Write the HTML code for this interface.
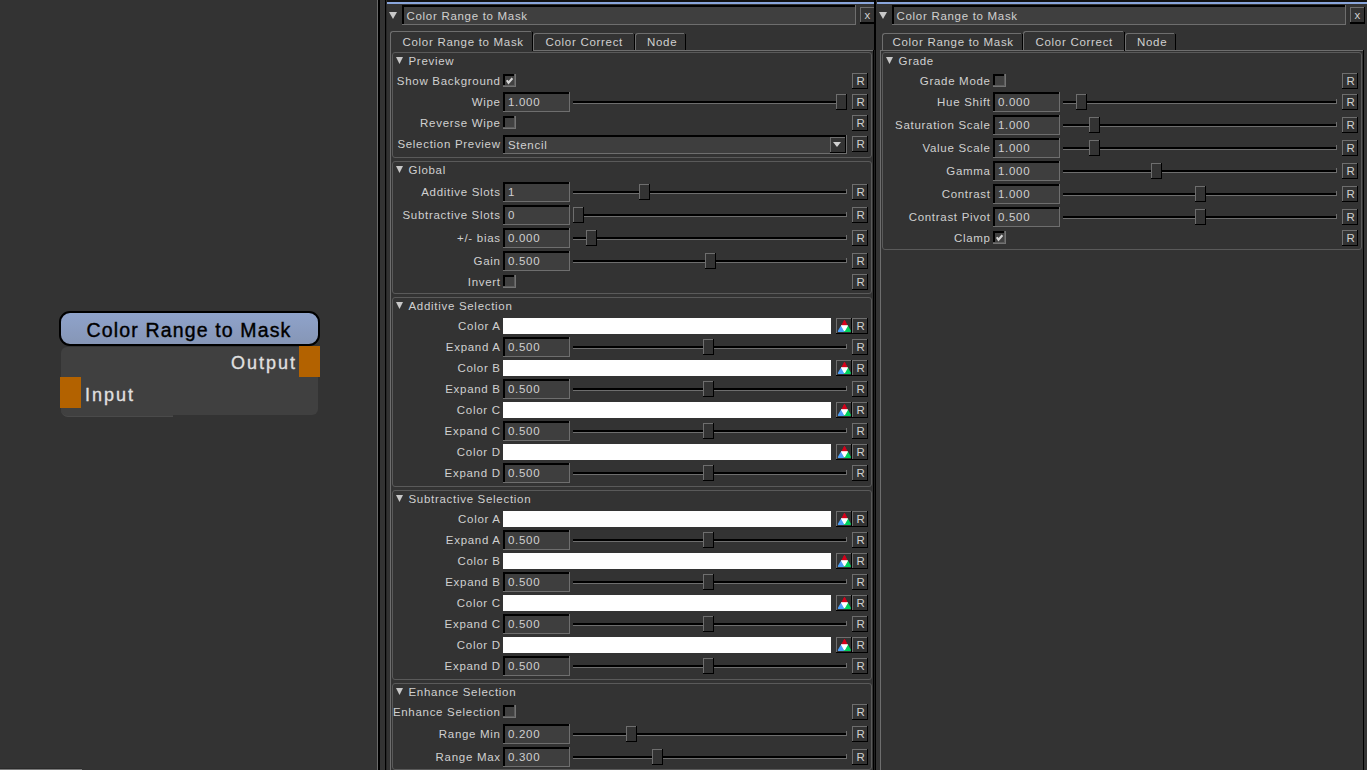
<!DOCTYPE html>
<html><head><meta charset="utf-8"><style>
html,body{margin:0;padding:0;}
body{width:1367px;height:770px;background:#333333;position:relative;overflow:hidden;font-family:"Liberation Sans", sans-serif;}
body>div,body>svg{position:absolute;box-sizing:border-box;}
.t{white-space:nowrap;}
</style></head><body>
<div style="left:0px;top:769px;width:82px;height:1px;background:#7a7a7a;"></div>
<div style="left:0px;top:768px;width:82px;height:1px;background:#2a2a2a;"></div>
<div style="left:61px;top:347px;width:257px;height:68px;background:#404040;border-radius:6px;"></div>
<div style="left:61px;top:398px;width:112px;height:19px;background:#404040;border-bottom:1px solid #4a4a4a;border-bottom-left-radius:7px;"></div>
<div style="left:59px;top:311px;width:261px;height:35px;border:2px solid #000;border-radius:11px;background:linear-gradient(#8fa3cb,#8696b6);"></div>
<div class="t" style="left:86.5px;top:320.24px;font-size:19.5px;line-height:20px;letter-spacing:1.15px;color:#000;-webkit-text-stroke:0.4px #000;">Color Range to Mask</div>
<div style="left:299px;top:346px;width:21px;height:31px;background:#b36200;"></div>
<div style="left:60px;top:377px;width:21px;height:31px;background:#b36200;"></div>
<div class="t" style="right:1070.00px;top:354.26px;font-size:18px;line-height:18px;letter-spacing:2.0px;color:#e0e0e0;text-align:right;-webkit-text-stroke:0.3px #e0e0e0;">Output</div>
<div class="t" style="left:85px;top:385.76px;font-size:18px;line-height:18px;letter-spacing:2.0px;color:#e0e0e0;-webkit-text-stroke:0.3px #e0e0e0;">Input</div>
<div style="left:377px;top:0px;width:1px;height:770px;background:#6a6a6a;"></div>
<div style="left:378px;top:0px;width:2px;height:770px;background:#000;"></div>
<div style="left:385px;top:0px;width:1px;height:770px;background:#000;"></div>
<div style="left:386px;top:0px;width:1px;height:770px;background:#262626;"></div>
<div style="left:387px;top:0px;width:487px;height:2px;background:#111;"></div>
<div style="left:387px;top:2px;width:487px;height:2px;background:#8aa6dc;"></div>
<div style="left:874px;top:0px;width:2px;height:770px;background:#000;"></div>
<div style="left:877px;top:0px;width:490px;height:2px;background:#111;"></div>
<div style="left:877px;top:2px;width:490px;height:2px;background:#8aa6dc;"></div>
<div style="left:390px;top:50px;width:1px;height:720px;background:#6e6e6e;"></div>
<div style="left:533px;top:50px;width:340px;height:1px;background:#6e6e6e;"></div>
<div style="left:873px;top:50px;width:1px;height:720px;background:#000;"></div>
<div style="left:874px;top:50px;width:1px;height:720px;background:#1e1e1e;"></div>
<svg style="left:389px;top:12px" width="8" height="7"><path d="M0 0 L8 0 L4.0 7 Z" fill="#c8c8c8"/></svg>
<div style="left:402px;top:5px;width:454px;height:20px;background:#6e6e6e;"></div>
<div style="left:402px;top:5px;width:453px;height:19px;background:#000;"></div>
<div style="left:404px;top:7px;width:451px;height:17px;background:#3f3f3f;"></div>
<div class="t" style="left:406.5px;top:10.02px;font-size:11.5px;line-height:12px;letter-spacing:0.7px;color:#d0d0d0;">Color Range to Mask</div>
<div style="left:860px;top:7px;width:15px;height:17px;background:#000;"></div>
<div style="left:860px;top:7px;width:14px;height:15px;background:#6e6e6e;"></div>
<div style="left:861px;top:8px;width:13px;height:14px;background:#333333;"></div>
<div class="t" style="left:864.5px;top:9.02px;font-size:11.5px;line-height:12px;letter-spacing:0px;color:#d0d0d0;">x</div>
<div style="left:390px;top:31px;width:141px;height:20px;border-left:1px solid #6e6e6e;border-top:1px solid #6e6e6e;border-top-left-radius:3px;"></div>
<div style="left:532px;top:32px;width:1px;height:19px;background:#000;"></div>
<div class="t" style="left:402.5px;top:36.32px;font-size:11.5px;line-height:12px;letter-spacing:0.7px;color:#d0d0d0;">Color Range to Mask</div>
<div style="left:533px;top:33px;width:100px;height:18px;border-left:1px solid #6e6e6e;border-top:1px solid #6e6e6e;border-top-left-radius:3px;"></div>
<div style="left:634px;top:34px;width:1px;height:17px;background:#000;"></div>
<div class="t" style="left:545.5px;top:36.32px;font-size:11.5px;line-height:12px;letter-spacing:0.7px;color:#d0d0d0;">Color Correct</div>
<div style="left:635px;top:33px;width:49px;height:18px;border-left:1px solid #6e6e6e;border-top:1px solid #6e6e6e;border-top-left-radius:3px;"></div>
<div style="left:685px;top:34px;width:1px;height:17px;background:#000;"></div>
<div class="t" style="left:647px;top:36.32px;font-size:11.5px;line-height:12px;letter-spacing:0.7px;color:#d0d0d0;">Node</div>
<div style="left:533px;top:50px;width:340px;height:1px;background:#6e6e6e;"></div>
<div style="left:392px;top:52px;width:480px;height:106px;border:1px solid #5a5a5a;border-radius:3px;"></div>
<svg style="left:396px;top:57px" width="7" height="7"><path d="M0 0 L7 0 L3.5 7 Z" fill="#c8c8c8"/></svg>
<div class="t" style="left:408.5px;top:55.02px;font-size:11.5px;line-height:12px;letter-spacing:0.7px;color:#d0d0d0;">Preview</div>
<div class="t" style="right:866.30px;top:74.52px;font-size:11.5px;line-height:12px;letter-spacing:0.7px;color:#d0d0d0;text-align:right;">Show Background</div>
<div style="left:503px;top:74px;width:13px;height:13px;background:#737373;"></div>
<div style="left:503px;top:74px;width:12px;height:12px;background:#5c5c5c;"></div>
<div style="left:503px;top:74px;width:11px;height:11px;background:#000;"></div>
<div style="left:505px;top:76px;width:9px;height:9px;background:#414141;"></div>
<svg style="left:503px;top:74px" width="13" height="13"><path d="M3.8 6.2 L5.5 8.8 L9.4 4.2" stroke="#d4d4d4" stroke-width="2.1" fill="none"/></svg>
<div style="left:852px;top:73px;width:16px;height:16px;background:#000000;"></div>
<div style="left:852px;top:73px;width:15px;height:15px;background:#6e6e6e;"></div>
<div style="left:853px;top:74px;width:14px;height:14px;background:#333333;"></div>
<div class="t" style="left:856.5px;top:75.02px;font-size:11.5px;line-height:12px;letter-spacing:0px;color:#d0d0d0;">R</div>
<div class="t" style="right:866.30px;top:96.02px;font-size:11.5px;line-height:12px;letter-spacing:0.7px;color:#d0d0d0;text-align:right;">Wipe</div>
<div style="left:503px;top:92px;width:67px;height:20px;background:#6e6e6e;"></div>
<div style="left:503px;top:92px;width:66px;height:19px;background:#000000;"></div>
<div style="left:505px;top:94px;width:64px;height:17px;background:#3e3e3e;"></div>
<div class="t" style="left:508px;top:96.02px;font-size:11.5px;line-height:12px;letter-spacing:0.7px;color:#d0d0d0;">1.000</div>
<div style="left:573px;top:101px;width:274px;height:2px;background:#000000;"></div>
<div style="left:573px;top:103px;width:274px;height:1px;background:#6e6e6e;"></div>
<div style="left:846px;top:99px;width:1px;height:5px;background:#6e6e6e;"></div>
<div style="left:836px;top:94px;width:11px;height:16px;background:#000000;"></div>
<div style="left:836px;top:94px;width:10px;height:15px;background:#6e6e6e;"></div>
<div style="left:837px;top:95px;width:9px;height:14px;background:#333333;"></div>
<div style="left:852px;top:94px;width:16px;height:16px;background:#000000;"></div>
<div style="left:852px;top:94px;width:15px;height:15px;background:#6e6e6e;"></div>
<div style="left:853px;top:95px;width:14px;height:14px;background:#333333;"></div>
<div class="t" style="left:856.5px;top:96.02px;font-size:11.5px;line-height:12px;letter-spacing:0px;color:#d0d0d0;">R</div>
<div class="t" style="right:866.30px;top:116.52px;font-size:11.5px;line-height:12px;letter-spacing:0.7px;color:#d0d0d0;text-align:right;">Reverse Wipe</div>
<div style="left:503px;top:116px;width:13px;height:13px;background:#737373;"></div>
<div style="left:503px;top:116px;width:12px;height:12px;background:#5c5c5c;"></div>
<div style="left:503px;top:116px;width:11px;height:11px;background:#000;"></div>
<div style="left:505px;top:118px;width:9px;height:9px;background:#414141;"></div>
<div style="left:852px;top:115px;width:16px;height:16px;background:#000000;"></div>
<div style="left:852px;top:115px;width:15px;height:15px;background:#6e6e6e;"></div>
<div style="left:853px;top:116px;width:14px;height:14px;background:#333333;"></div>
<div class="t" style="left:856.5px;top:117.02px;font-size:11.5px;line-height:12px;letter-spacing:0px;color:#d0d0d0;">R</div>
<div class="t" style="right:866.30px;top:138.02px;font-size:11.5px;line-height:12px;letter-spacing:0.7px;color:#d0d0d0;text-align:right;">Selection Preview</div>
<div style="left:503px;top:135px;width:344px;height:19px;background:#6e6e6e;"></div>
<div style="left:503px;top:135px;width:343px;height:18px;background:#000000;"></div>
<div style="left:505px;top:137px;width:341px;height:16px;background:#3e3e3e;"></div>
<div class="t" style="left:508px;top:139.02px;font-size:11.5px;line-height:12px;letter-spacing:0.7px;color:#d0d0d0;">Stencil</div>
<div style="left:830px;top:137px;width:16px;height:16px;background:#000000;"></div>
<div style="left:830px;top:137px;width:15px;height:15px;background:#6e6e6e;"></div>
<div style="left:831px;top:138px;width:14px;height:14px;background:#333333;"></div>
<svg style="left:833px;top:142px" width="8" height="5"><path d="M0 0 L8 0 L4.0 5 Z" fill="#d0d0d0"/></svg>
<div style="left:852px;top:136px;width:16px;height:16px;background:#000000;"></div>
<div style="left:852px;top:136px;width:15px;height:15px;background:#6e6e6e;"></div>
<div style="left:853px;top:137px;width:14px;height:14px;background:#333333;"></div>
<div class="t" style="left:856.5px;top:138.02px;font-size:11.5px;line-height:12px;letter-spacing:0px;color:#d0d0d0;">R</div>
<div style="left:392px;top:161px;width:480px;height:133px;border:1px solid #5a5a5a;border-radius:3px;"></div>
<svg style="left:396px;top:166px" width="7" height="7"><path d="M0 0 L7 0 L3.5 7 Z" fill="#c8c8c8"/></svg>
<div class="t" style="left:408.5px;top:164.02px;font-size:11.5px;line-height:12px;letter-spacing:0.7px;color:#d0d0d0;">Global</div>
<div class="t" style="right:866.30px;top:186.02px;font-size:11.5px;line-height:12px;letter-spacing:0.7px;color:#d0d0d0;text-align:right;">Additive Slots</div>
<div style="left:503px;top:182px;width:67px;height:20px;background:#6e6e6e;"></div>
<div style="left:503px;top:182px;width:66px;height:19px;background:#000000;"></div>
<div style="left:505px;top:184px;width:64px;height:17px;background:#3e3e3e;"></div>
<div class="t" style="left:508px;top:186.02px;font-size:11.5px;line-height:12px;letter-spacing:0.7px;color:#d0d0d0;">1</div>
<div style="left:573px;top:191px;width:274px;height:2px;background:#000000;"></div>
<div style="left:573px;top:193px;width:274px;height:1px;background:#6e6e6e;"></div>
<div style="left:846px;top:189px;width:1px;height:5px;background:#6e6e6e;"></div>
<div style="left:639px;top:184px;width:11px;height:16px;background:#000000;"></div>
<div style="left:639px;top:184px;width:10px;height:15px;background:#6e6e6e;"></div>
<div style="left:640px;top:185px;width:9px;height:14px;background:#333333;"></div>
<div style="left:852px;top:184px;width:16px;height:16px;background:#000000;"></div>
<div style="left:852px;top:184px;width:15px;height:15px;background:#6e6e6e;"></div>
<div style="left:853px;top:185px;width:14px;height:14px;background:#333333;"></div>
<div class="t" style="left:856.5px;top:186.02px;font-size:11.5px;line-height:12px;letter-spacing:0px;color:#d0d0d0;">R</div>
<div class="t" style="right:866.30px;top:209.02px;font-size:11.5px;line-height:12px;letter-spacing:0.7px;color:#d0d0d0;text-align:right;">Subtractive Slots</div>
<div style="left:503px;top:205px;width:67px;height:20px;background:#6e6e6e;"></div>
<div style="left:503px;top:205px;width:66px;height:19px;background:#000000;"></div>
<div style="left:505px;top:207px;width:64px;height:17px;background:#3e3e3e;"></div>
<div class="t" style="left:508px;top:209.02px;font-size:11.5px;line-height:12px;letter-spacing:0.7px;color:#d0d0d0;">0</div>
<div style="left:573px;top:214px;width:274px;height:2px;background:#000000;"></div>
<div style="left:573px;top:216px;width:274px;height:1px;background:#6e6e6e;"></div>
<div style="left:846px;top:212px;width:1px;height:5px;background:#6e6e6e;"></div>
<div style="left:573px;top:207px;width:11px;height:16px;background:#000000;"></div>
<div style="left:573px;top:207px;width:10px;height:15px;background:#6e6e6e;"></div>
<div style="left:574px;top:208px;width:9px;height:14px;background:#333333;"></div>
<div style="left:852px;top:207px;width:16px;height:16px;background:#000000;"></div>
<div style="left:852px;top:207px;width:15px;height:15px;background:#6e6e6e;"></div>
<div style="left:853px;top:208px;width:14px;height:14px;background:#333333;"></div>
<div class="t" style="left:856.5px;top:209.02px;font-size:11.5px;line-height:12px;letter-spacing:0px;color:#d0d0d0;">R</div>
<div class="t" style="right:866.30px;top:232.02px;font-size:11.5px;line-height:12px;letter-spacing:0.7px;color:#d0d0d0;text-align:right;">+/- bias</div>
<div style="left:503px;top:228px;width:67px;height:20px;background:#6e6e6e;"></div>
<div style="left:503px;top:228px;width:66px;height:19px;background:#000000;"></div>
<div style="left:505px;top:230px;width:64px;height:17px;background:#3e3e3e;"></div>
<div class="t" style="left:508px;top:232.02px;font-size:11.5px;line-height:12px;letter-spacing:0.7px;color:#d0d0d0;">0.000</div>
<div style="left:573px;top:237px;width:274px;height:2px;background:#000000;"></div>
<div style="left:573px;top:239px;width:274px;height:1px;background:#6e6e6e;"></div>
<div style="left:846px;top:235px;width:1px;height:5px;background:#6e6e6e;"></div>
<div style="left:586px;top:230px;width:11px;height:16px;background:#000000;"></div>
<div style="left:586px;top:230px;width:10px;height:15px;background:#6e6e6e;"></div>
<div style="left:587px;top:231px;width:9px;height:14px;background:#333333;"></div>
<div style="left:852px;top:230px;width:16px;height:16px;background:#000000;"></div>
<div style="left:852px;top:230px;width:15px;height:15px;background:#6e6e6e;"></div>
<div style="left:853px;top:231px;width:14px;height:14px;background:#333333;"></div>
<div class="t" style="left:856.5px;top:232.02px;font-size:11.5px;line-height:12px;letter-spacing:0px;color:#d0d0d0;">R</div>
<div class="t" style="right:866.30px;top:255.02px;font-size:11.5px;line-height:12px;letter-spacing:0.7px;color:#d0d0d0;text-align:right;">Gain</div>
<div style="left:503px;top:251px;width:67px;height:20px;background:#6e6e6e;"></div>
<div style="left:503px;top:251px;width:66px;height:19px;background:#000000;"></div>
<div style="left:505px;top:253px;width:64px;height:17px;background:#3e3e3e;"></div>
<div class="t" style="left:508px;top:255.02px;font-size:11.5px;line-height:12px;letter-spacing:0.7px;color:#d0d0d0;">0.500</div>
<div style="left:573px;top:260px;width:274px;height:2px;background:#000000;"></div>
<div style="left:573px;top:262px;width:274px;height:1px;background:#6e6e6e;"></div>
<div style="left:846px;top:258px;width:1px;height:5px;background:#6e6e6e;"></div>
<div style="left:705px;top:253px;width:11px;height:16px;background:#000000;"></div>
<div style="left:705px;top:253px;width:10px;height:15px;background:#6e6e6e;"></div>
<div style="left:706px;top:254px;width:9px;height:14px;background:#333333;"></div>
<div style="left:852px;top:253px;width:16px;height:16px;background:#000000;"></div>
<div style="left:852px;top:253px;width:15px;height:15px;background:#6e6e6e;"></div>
<div style="left:853px;top:254px;width:14px;height:14px;background:#333333;"></div>
<div class="t" style="left:856.5px;top:255.02px;font-size:11.5px;line-height:12px;letter-spacing:0px;color:#d0d0d0;">R</div>
<div class="t" style="right:866.30px;top:275.52px;font-size:11.5px;line-height:12px;letter-spacing:0.7px;color:#d0d0d0;text-align:right;">Invert</div>
<div style="left:503px;top:275px;width:13px;height:13px;background:#737373;"></div>
<div style="left:503px;top:275px;width:12px;height:12px;background:#5c5c5c;"></div>
<div style="left:503px;top:275px;width:11px;height:11px;background:#000;"></div>
<div style="left:505px;top:277px;width:9px;height:9px;background:#414141;"></div>
<div style="left:852px;top:274px;width:16px;height:16px;background:#000000;"></div>
<div style="left:852px;top:274px;width:15px;height:15px;background:#6e6e6e;"></div>
<div style="left:853px;top:275px;width:14px;height:14px;background:#333333;"></div>
<div class="t" style="left:856.5px;top:276.02px;font-size:11.5px;line-height:12px;letter-spacing:0px;color:#d0d0d0;">R</div>
<div style="left:392px;top:297px;width:480px;height:190px;border:1px solid #5a5a5a;border-radius:3px;"></div>
<svg style="left:396px;top:302px" width="7" height="7"><path d="M0 0 L7 0 L3.5 7 Z" fill="#c8c8c8"/></svg>
<div class="t" style="left:408.5px;top:300.02px;font-size:11.5px;line-height:12px;letter-spacing:0.7px;color:#d0d0d0;">Additive Selection</div>
<div class="t" style="right:866.30px;top:320.02px;font-size:11.5px;line-height:12px;letter-spacing:0.7px;color:#d0d0d0;text-align:right;">Color A</div>
<div style="left:503px;top:318px;width:328px;height:16px;background:#ffffff;"></div>
<div style="left:836px;top:318px;width:16px;height:16px;background:#000000;"></div>
<div style="left:836px;top:318px;width:15px;height:15px;background:#6e6e6e;"></div>
<div style="left:837px;top:319px;width:14px;height:14px;background:#333333;"></div>
<svg style="left:836px;top:318px" width="16" height="16">
<path d="M8.5 2.2 L5.6 8 L11.4 8 Z" fill="#d8001a" stroke="#d8001a" stroke-width="1" stroke-linejoin="round"/>
<path d="M5.6 8.2 L2.6 13.2 L8.5 13.2 Z" fill="#4d9ff8" stroke="#4d9ff8" stroke-width="1.6" stroke-linejoin="round"/>
<path d="M11.4 8.2 L8.5 13.2 L14.2 13.2 Z" fill="#00d25e" stroke="#00d25e" stroke-width="1.6" stroke-linejoin="round"/>
<path d="M5.6 7.8 L11.4 7.8 L8.5 12.6 Z" fill="#ffffff" stroke="#ffffff" stroke-width="1.2" stroke-linejoin="round"/>
</svg>
<div style="left:852px;top:318px;width:16px;height:16px;background:#000000;"></div>
<div style="left:852px;top:318px;width:15px;height:15px;background:#6e6e6e;"></div>
<div style="left:853px;top:319px;width:14px;height:14px;background:#333333;"></div>
<div class="t" style="left:856.5px;top:320.02px;font-size:11.5px;line-height:12px;letter-spacing:0px;color:#d0d0d0;">R</div>
<div class="t" style="right:866.30px;top:341.02px;font-size:11.5px;line-height:12px;letter-spacing:0.7px;color:#d0d0d0;text-align:right;">Expand A</div>
<div style="left:503px;top:337px;width:67px;height:20px;background:#6e6e6e;"></div>
<div style="left:503px;top:337px;width:66px;height:19px;background:#000000;"></div>
<div style="left:505px;top:339px;width:64px;height:17px;background:#3e3e3e;"></div>
<div class="t" style="left:508px;top:341.02px;font-size:11.5px;line-height:12px;letter-spacing:0.7px;color:#d0d0d0;">0.500</div>
<div style="left:573px;top:346px;width:274px;height:2px;background:#000000;"></div>
<div style="left:573px;top:348px;width:274px;height:1px;background:#6e6e6e;"></div>
<div style="left:846px;top:344px;width:1px;height:5px;background:#6e6e6e;"></div>
<div style="left:703px;top:339px;width:11px;height:16px;background:#000000;"></div>
<div style="left:703px;top:339px;width:10px;height:15px;background:#6e6e6e;"></div>
<div style="left:704px;top:340px;width:9px;height:14px;background:#333333;"></div>
<div style="left:852px;top:339px;width:16px;height:16px;background:#000000;"></div>
<div style="left:852px;top:339px;width:15px;height:15px;background:#6e6e6e;"></div>
<div style="left:853px;top:340px;width:14px;height:14px;background:#333333;"></div>
<div class="t" style="left:856.5px;top:341.02px;font-size:11.5px;line-height:12px;letter-spacing:0px;color:#d0d0d0;">R</div>
<div class="t" style="right:866.30px;top:362.02px;font-size:11.5px;line-height:12px;letter-spacing:0.7px;color:#d0d0d0;text-align:right;">Color B</div>
<div style="left:503px;top:360px;width:328px;height:16px;background:#ffffff;"></div>
<div style="left:836px;top:360px;width:16px;height:16px;background:#000000;"></div>
<div style="left:836px;top:360px;width:15px;height:15px;background:#6e6e6e;"></div>
<div style="left:837px;top:361px;width:14px;height:14px;background:#333333;"></div>
<svg style="left:836px;top:360px" width="16" height="16">
<path d="M8.5 2.2 L5.6 8 L11.4 8 Z" fill="#d8001a" stroke="#d8001a" stroke-width="1" stroke-linejoin="round"/>
<path d="M5.6 8.2 L2.6 13.2 L8.5 13.2 Z" fill="#4d9ff8" stroke="#4d9ff8" stroke-width="1.6" stroke-linejoin="round"/>
<path d="M11.4 8.2 L8.5 13.2 L14.2 13.2 Z" fill="#00d25e" stroke="#00d25e" stroke-width="1.6" stroke-linejoin="round"/>
<path d="M5.6 7.8 L11.4 7.8 L8.5 12.6 Z" fill="#ffffff" stroke="#ffffff" stroke-width="1.2" stroke-linejoin="round"/>
</svg>
<div style="left:852px;top:360px;width:16px;height:16px;background:#000000;"></div>
<div style="left:852px;top:360px;width:15px;height:15px;background:#6e6e6e;"></div>
<div style="left:853px;top:361px;width:14px;height:14px;background:#333333;"></div>
<div class="t" style="left:856.5px;top:362.02px;font-size:11.5px;line-height:12px;letter-spacing:0px;color:#d0d0d0;">R</div>
<div class="t" style="right:866.30px;top:383.02px;font-size:11.5px;line-height:12px;letter-spacing:0.7px;color:#d0d0d0;text-align:right;">Expand B</div>
<div style="left:503px;top:379px;width:67px;height:20px;background:#6e6e6e;"></div>
<div style="left:503px;top:379px;width:66px;height:19px;background:#000000;"></div>
<div style="left:505px;top:381px;width:64px;height:17px;background:#3e3e3e;"></div>
<div class="t" style="left:508px;top:383.02px;font-size:11.5px;line-height:12px;letter-spacing:0.7px;color:#d0d0d0;">0.500</div>
<div style="left:573px;top:388px;width:274px;height:2px;background:#000000;"></div>
<div style="left:573px;top:390px;width:274px;height:1px;background:#6e6e6e;"></div>
<div style="left:846px;top:386px;width:1px;height:5px;background:#6e6e6e;"></div>
<div style="left:703px;top:381px;width:11px;height:16px;background:#000000;"></div>
<div style="left:703px;top:381px;width:10px;height:15px;background:#6e6e6e;"></div>
<div style="left:704px;top:382px;width:9px;height:14px;background:#333333;"></div>
<div style="left:852px;top:381px;width:16px;height:16px;background:#000000;"></div>
<div style="left:852px;top:381px;width:15px;height:15px;background:#6e6e6e;"></div>
<div style="left:853px;top:382px;width:14px;height:14px;background:#333333;"></div>
<div class="t" style="left:856.5px;top:383.02px;font-size:11.5px;line-height:12px;letter-spacing:0px;color:#d0d0d0;">R</div>
<div class="t" style="right:866.30px;top:404.02px;font-size:11.5px;line-height:12px;letter-spacing:0.7px;color:#d0d0d0;text-align:right;">Color C</div>
<div style="left:503px;top:402px;width:328px;height:16px;background:#ffffff;"></div>
<div style="left:836px;top:402px;width:16px;height:16px;background:#000000;"></div>
<div style="left:836px;top:402px;width:15px;height:15px;background:#6e6e6e;"></div>
<div style="left:837px;top:403px;width:14px;height:14px;background:#333333;"></div>
<svg style="left:836px;top:402px" width="16" height="16">
<path d="M8.5 2.2 L5.6 8 L11.4 8 Z" fill="#d8001a" stroke="#d8001a" stroke-width="1" stroke-linejoin="round"/>
<path d="M5.6 8.2 L2.6 13.2 L8.5 13.2 Z" fill="#4d9ff8" stroke="#4d9ff8" stroke-width="1.6" stroke-linejoin="round"/>
<path d="M11.4 8.2 L8.5 13.2 L14.2 13.2 Z" fill="#00d25e" stroke="#00d25e" stroke-width="1.6" stroke-linejoin="round"/>
<path d="M5.6 7.8 L11.4 7.8 L8.5 12.6 Z" fill="#ffffff" stroke="#ffffff" stroke-width="1.2" stroke-linejoin="round"/>
</svg>
<div style="left:852px;top:402px;width:16px;height:16px;background:#000000;"></div>
<div style="left:852px;top:402px;width:15px;height:15px;background:#6e6e6e;"></div>
<div style="left:853px;top:403px;width:14px;height:14px;background:#333333;"></div>
<div class="t" style="left:856.5px;top:404.02px;font-size:11.5px;line-height:12px;letter-spacing:0px;color:#d0d0d0;">R</div>
<div class="t" style="right:866.30px;top:425.02px;font-size:11.5px;line-height:12px;letter-spacing:0.7px;color:#d0d0d0;text-align:right;">Expand C</div>
<div style="left:503px;top:421px;width:67px;height:20px;background:#6e6e6e;"></div>
<div style="left:503px;top:421px;width:66px;height:19px;background:#000000;"></div>
<div style="left:505px;top:423px;width:64px;height:17px;background:#3e3e3e;"></div>
<div class="t" style="left:508px;top:425.02px;font-size:11.5px;line-height:12px;letter-spacing:0.7px;color:#d0d0d0;">0.500</div>
<div style="left:573px;top:430px;width:274px;height:2px;background:#000000;"></div>
<div style="left:573px;top:432px;width:274px;height:1px;background:#6e6e6e;"></div>
<div style="left:846px;top:428px;width:1px;height:5px;background:#6e6e6e;"></div>
<div style="left:703px;top:423px;width:11px;height:16px;background:#000000;"></div>
<div style="left:703px;top:423px;width:10px;height:15px;background:#6e6e6e;"></div>
<div style="left:704px;top:424px;width:9px;height:14px;background:#333333;"></div>
<div style="left:852px;top:423px;width:16px;height:16px;background:#000000;"></div>
<div style="left:852px;top:423px;width:15px;height:15px;background:#6e6e6e;"></div>
<div style="left:853px;top:424px;width:14px;height:14px;background:#333333;"></div>
<div class="t" style="left:856.5px;top:425.02px;font-size:11.5px;line-height:12px;letter-spacing:0px;color:#d0d0d0;">R</div>
<div class="t" style="right:866.30px;top:446.02px;font-size:11.5px;line-height:12px;letter-spacing:0.7px;color:#d0d0d0;text-align:right;">Color D</div>
<div style="left:503px;top:444px;width:328px;height:16px;background:#ffffff;"></div>
<div style="left:836px;top:444px;width:16px;height:16px;background:#000000;"></div>
<div style="left:836px;top:444px;width:15px;height:15px;background:#6e6e6e;"></div>
<div style="left:837px;top:445px;width:14px;height:14px;background:#333333;"></div>
<svg style="left:836px;top:444px" width="16" height="16">
<path d="M8.5 2.2 L5.6 8 L11.4 8 Z" fill="#d8001a" stroke="#d8001a" stroke-width="1" stroke-linejoin="round"/>
<path d="M5.6 8.2 L2.6 13.2 L8.5 13.2 Z" fill="#4d9ff8" stroke="#4d9ff8" stroke-width="1.6" stroke-linejoin="round"/>
<path d="M11.4 8.2 L8.5 13.2 L14.2 13.2 Z" fill="#00d25e" stroke="#00d25e" stroke-width="1.6" stroke-linejoin="round"/>
<path d="M5.6 7.8 L11.4 7.8 L8.5 12.6 Z" fill="#ffffff" stroke="#ffffff" stroke-width="1.2" stroke-linejoin="round"/>
</svg>
<div style="left:852px;top:444px;width:16px;height:16px;background:#000000;"></div>
<div style="left:852px;top:444px;width:15px;height:15px;background:#6e6e6e;"></div>
<div style="left:853px;top:445px;width:14px;height:14px;background:#333333;"></div>
<div class="t" style="left:856.5px;top:446.02px;font-size:11.5px;line-height:12px;letter-spacing:0px;color:#d0d0d0;">R</div>
<div class="t" style="right:866.30px;top:467.02px;font-size:11.5px;line-height:12px;letter-spacing:0.7px;color:#d0d0d0;text-align:right;">Expand D</div>
<div style="left:503px;top:463px;width:67px;height:20px;background:#6e6e6e;"></div>
<div style="left:503px;top:463px;width:66px;height:19px;background:#000000;"></div>
<div style="left:505px;top:465px;width:64px;height:17px;background:#3e3e3e;"></div>
<div class="t" style="left:508px;top:467.02px;font-size:11.5px;line-height:12px;letter-spacing:0.7px;color:#d0d0d0;">0.500</div>
<div style="left:573px;top:472px;width:274px;height:2px;background:#000000;"></div>
<div style="left:573px;top:474px;width:274px;height:1px;background:#6e6e6e;"></div>
<div style="left:846px;top:470px;width:1px;height:5px;background:#6e6e6e;"></div>
<div style="left:703px;top:465px;width:11px;height:16px;background:#000000;"></div>
<div style="left:703px;top:465px;width:10px;height:15px;background:#6e6e6e;"></div>
<div style="left:704px;top:466px;width:9px;height:14px;background:#333333;"></div>
<div style="left:852px;top:465px;width:16px;height:16px;background:#000000;"></div>
<div style="left:852px;top:465px;width:15px;height:15px;background:#6e6e6e;"></div>
<div style="left:853px;top:466px;width:14px;height:14px;background:#333333;"></div>
<div class="t" style="left:856.5px;top:467.02px;font-size:11.5px;line-height:12px;letter-spacing:0px;color:#d0d0d0;">R</div>
<div style="left:392px;top:490px;width:480px;height:190px;border:1px solid #5a5a5a;border-radius:3px;"></div>
<svg style="left:396px;top:495px" width="7" height="7"><path d="M0 0 L7 0 L3.5 7 Z" fill="#c8c8c8"/></svg>
<div class="t" style="left:408.5px;top:493.02px;font-size:11.5px;line-height:12px;letter-spacing:0.7px;color:#d0d0d0;">Subtractive Selection</div>
<div class="t" style="right:866.30px;top:513.02px;font-size:11.5px;line-height:12px;letter-spacing:0.7px;color:#d0d0d0;text-align:right;">Color A</div>
<div style="left:503px;top:511px;width:328px;height:16px;background:#ffffff;"></div>
<div style="left:836px;top:511px;width:16px;height:16px;background:#000000;"></div>
<div style="left:836px;top:511px;width:15px;height:15px;background:#6e6e6e;"></div>
<div style="left:837px;top:512px;width:14px;height:14px;background:#333333;"></div>
<svg style="left:836px;top:511px" width="16" height="16">
<path d="M8.5 2.2 L5.6 8 L11.4 8 Z" fill="#d8001a" stroke="#d8001a" stroke-width="1" stroke-linejoin="round"/>
<path d="M5.6 8.2 L2.6 13.2 L8.5 13.2 Z" fill="#4d9ff8" stroke="#4d9ff8" stroke-width="1.6" stroke-linejoin="round"/>
<path d="M11.4 8.2 L8.5 13.2 L14.2 13.2 Z" fill="#00d25e" stroke="#00d25e" stroke-width="1.6" stroke-linejoin="round"/>
<path d="M5.6 7.8 L11.4 7.8 L8.5 12.6 Z" fill="#ffffff" stroke="#ffffff" stroke-width="1.2" stroke-linejoin="round"/>
</svg>
<div style="left:852px;top:511px;width:16px;height:16px;background:#000000;"></div>
<div style="left:852px;top:511px;width:15px;height:15px;background:#6e6e6e;"></div>
<div style="left:853px;top:512px;width:14px;height:14px;background:#333333;"></div>
<div class="t" style="left:856.5px;top:513.02px;font-size:11.5px;line-height:12px;letter-spacing:0px;color:#d0d0d0;">R</div>
<div class="t" style="right:866.30px;top:534.02px;font-size:11.5px;line-height:12px;letter-spacing:0.7px;color:#d0d0d0;text-align:right;">Expand A</div>
<div style="left:503px;top:530px;width:67px;height:20px;background:#6e6e6e;"></div>
<div style="left:503px;top:530px;width:66px;height:19px;background:#000000;"></div>
<div style="left:505px;top:532px;width:64px;height:17px;background:#3e3e3e;"></div>
<div class="t" style="left:508px;top:534.02px;font-size:11.5px;line-height:12px;letter-spacing:0.7px;color:#d0d0d0;">0.500</div>
<div style="left:573px;top:539px;width:274px;height:2px;background:#000000;"></div>
<div style="left:573px;top:541px;width:274px;height:1px;background:#6e6e6e;"></div>
<div style="left:846px;top:537px;width:1px;height:5px;background:#6e6e6e;"></div>
<div style="left:703px;top:532px;width:11px;height:16px;background:#000000;"></div>
<div style="left:703px;top:532px;width:10px;height:15px;background:#6e6e6e;"></div>
<div style="left:704px;top:533px;width:9px;height:14px;background:#333333;"></div>
<div style="left:852px;top:532px;width:16px;height:16px;background:#000000;"></div>
<div style="left:852px;top:532px;width:15px;height:15px;background:#6e6e6e;"></div>
<div style="left:853px;top:533px;width:14px;height:14px;background:#333333;"></div>
<div class="t" style="left:856.5px;top:534.02px;font-size:11.5px;line-height:12px;letter-spacing:0px;color:#d0d0d0;">R</div>
<div class="t" style="right:866.30px;top:555.02px;font-size:11.5px;line-height:12px;letter-spacing:0.7px;color:#d0d0d0;text-align:right;">Color B</div>
<div style="left:503px;top:553px;width:328px;height:16px;background:#ffffff;"></div>
<div style="left:836px;top:553px;width:16px;height:16px;background:#000000;"></div>
<div style="left:836px;top:553px;width:15px;height:15px;background:#6e6e6e;"></div>
<div style="left:837px;top:554px;width:14px;height:14px;background:#333333;"></div>
<svg style="left:836px;top:553px" width="16" height="16">
<path d="M8.5 2.2 L5.6 8 L11.4 8 Z" fill="#d8001a" stroke="#d8001a" stroke-width="1" stroke-linejoin="round"/>
<path d="M5.6 8.2 L2.6 13.2 L8.5 13.2 Z" fill="#4d9ff8" stroke="#4d9ff8" stroke-width="1.6" stroke-linejoin="round"/>
<path d="M11.4 8.2 L8.5 13.2 L14.2 13.2 Z" fill="#00d25e" stroke="#00d25e" stroke-width="1.6" stroke-linejoin="round"/>
<path d="M5.6 7.8 L11.4 7.8 L8.5 12.6 Z" fill="#ffffff" stroke="#ffffff" stroke-width="1.2" stroke-linejoin="round"/>
</svg>
<div style="left:852px;top:553px;width:16px;height:16px;background:#000000;"></div>
<div style="left:852px;top:553px;width:15px;height:15px;background:#6e6e6e;"></div>
<div style="left:853px;top:554px;width:14px;height:14px;background:#333333;"></div>
<div class="t" style="left:856.5px;top:555.02px;font-size:11.5px;line-height:12px;letter-spacing:0px;color:#d0d0d0;">R</div>
<div class="t" style="right:866.30px;top:576.02px;font-size:11.5px;line-height:12px;letter-spacing:0.7px;color:#d0d0d0;text-align:right;">Expand B</div>
<div style="left:503px;top:572px;width:67px;height:20px;background:#6e6e6e;"></div>
<div style="left:503px;top:572px;width:66px;height:19px;background:#000000;"></div>
<div style="left:505px;top:574px;width:64px;height:17px;background:#3e3e3e;"></div>
<div class="t" style="left:508px;top:576.02px;font-size:11.5px;line-height:12px;letter-spacing:0.7px;color:#d0d0d0;">0.500</div>
<div style="left:573px;top:581px;width:274px;height:2px;background:#000000;"></div>
<div style="left:573px;top:583px;width:274px;height:1px;background:#6e6e6e;"></div>
<div style="left:846px;top:579px;width:1px;height:5px;background:#6e6e6e;"></div>
<div style="left:703px;top:574px;width:11px;height:16px;background:#000000;"></div>
<div style="left:703px;top:574px;width:10px;height:15px;background:#6e6e6e;"></div>
<div style="left:704px;top:575px;width:9px;height:14px;background:#333333;"></div>
<div style="left:852px;top:574px;width:16px;height:16px;background:#000000;"></div>
<div style="left:852px;top:574px;width:15px;height:15px;background:#6e6e6e;"></div>
<div style="left:853px;top:575px;width:14px;height:14px;background:#333333;"></div>
<div class="t" style="left:856.5px;top:576.02px;font-size:11.5px;line-height:12px;letter-spacing:0px;color:#d0d0d0;">R</div>
<div class="t" style="right:866.30px;top:597.02px;font-size:11.5px;line-height:12px;letter-spacing:0.7px;color:#d0d0d0;text-align:right;">Color C</div>
<div style="left:503px;top:595px;width:328px;height:16px;background:#ffffff;"></div>
<div style="left:836px;top:595px;width:16px;height:16px;background:#000000;"></div>
<div style="left:836px;top:595px;width:15px;height:15px;background:#6e6e6e;"></div>
<div style="left:837px;top:596px;width:14px;height:14px;background:#333333;"></div>
<svg style="left:836px;top:595px" width="16" height="16">
<path d="M8.5 2.2 L5.6 8 L11.4 8 Z" fill="#d8001a" stroke="#d8001a" stroke-width="1" stroke-linejoin="round"/>
<path d="M5.6 8.2 L2.6 13.2 L8.5 13.2 Z" fill="#4d9ff8" stroke="#4d9ff8" stroke-width="1.6" stroke-linejoin="round"/>
<path d="M11.4 8.2 L8.5 13.2 L14.2 13.2 Z" fill="#00d25e" stroke="#00d25e" stroke-width="1.6" stroke-linejoin="round"/>
<path d="M5.6 7.8 L11.4 7.8 L8.5 12.6 Z" fill="#ffffff" stroke="#ffffff" stroke-width="1.2" stroke-linejoin="round"/>
</svg>
<div style="left:852px;top:595px;width:16px;height:16px;background:#000000;"></div>
<div style="left:852px;top:595px;width:15px;height:15px;background:#6e6e6e;"></div>
<div style="left:853px;top:596px;width:14px;height:14px;background:#333333;"></div>
<div class="t" style="left:856.5px;top:597.02px;font-size:11.5px;line-height:12px;letter-spacing:0px;color:#d0d0d0;">R</div>
<div class="t" style="right:866.30px;top:618.02px;font-size:11.5px;line-height:12px;letter-spacing:0.7px;color:#d0d0d0;text-align:right;">Expand C</div>
<div style="left:503px;top:614px;width:67px;height:20px;background:#6e6e6e;"></div>
<div style="left:503px;top:614px;width:66px;height:19px;background:#000000;"></div>
<div style="left:505px;top:616px;width:64px;height:17px;background:#3e3e3e;"></div>
<div class="t" style="left:508px;top:618.02px;font-size:11.5px;line-height:12px;letter-spacing:0.7px;color:#d0d0d0;">0.500</div>
<div style="left:573px;top:623px;width:274px;height:2px;background:#000000;"></div>
<div style="left:573px;top:625px;width:274px;height:1px;background:#6e6e6e;"></div>
<div style="left:846px;top:621px;width:1px;height:5px;background:#6e6e6e;"></div>
<div style="left:703px;top:616px;width:11px;height:16px;background:#000000;"></div>
<div style="left:703px;top:616px;width:10px;height:15px;background:#6e6e6e;"></div>
<div style="left:704px;top:617px;width:9px;height:14px;background:#333333;"></div>
<div style="left:852px;top:616px;width:16px;height:16px;background:#000000;"></div>
<div style="left:852px;top:616px;width:15px;height:15px;background:#6e6e6e;"></div>
<div style="left:853px;top:617px;width:14px;height:14px;background:#333333;"></div>
<div class="t" style="left:856.5px;top:618.02px;font-size:11.5px;line-height:12px;letter-spacing:0px;color:#d0d0d0;">R</div>
<div class="t" style="right:866.30px;top:639.02px;font-size:11.5px;line-height:12px;letter-spacing:0.7px;color:#d0d0d0;text-align:right;">Color D</div>
<div style="left:503px;top:637px;width:328px;height:16px;background:#ffffff;"></div>
<div style="left:836px;top:637px;width:16px;height:16px;background:#000000;"></div>
<div style="left:836px;top:637px;width:15px;height:15px;background:#6e6e6e;"></div>
<div style="left:837px;top:638px;width:14px;height:14px;background:#333333;"></div>
<svg style="left:836px;top:637px" width="16" height="16">
<path d="M8.5 2.2 L5.6 8 L11.4 8 Z" fill="#d8001a" stroke="#d8001a" stroke-width="1" stroke-linejoin="round"/>
<path d="M5.6 8.2 L2.6 13.2 L8.5 13.2 Z" fill="#4d9ff8" stroke="#4d9ff8" stroke-width="1.6" stroke-linejoin="round"/>
<path d="M11.4 8.2 L8.5 13.2 L14.2 13.2 Z" fill="#00d25e" stroke="#00d25e" stroke-width="1.6" stroke-linejoin="round"/>
<path d="M5.6 7.8 L11.4 7.8 L8.5 12.6 Z" fill="#ffffff" stroke="#ffffff" stroke-width="1.2" stroke-linejoin="round"/>
</svg>
<div style="left:852px;top:637px;width:16px;height:16px;background:#000000;"></div>
<div style="left:852px;top:637px;width:15px;height:15px;background:#6e6e6e;"></div>
<div style="left:853px;top:638px;width:14px;height:14px;background:#333333;"></div>
<div class="t" style="left:856.5px;top:639.02px;font-size:11.5px;line-height:12px;letter-spacing:0px;color:#d0d0d0;">R</div>
<div class="t" style="right:866.30px;top:660.02px;font-size:11.5px;line-height:12px;letter-spacing:0.7px;color:#d0d0d0;text-align:right;">Expand D</div>
<div style="left:503px;top:656px;width:67px;height:20px;background:#6e6e6e;"></div>
<div style="left:503px;top:656px;width:66px;height:19px;background:#000000;"></div>
<div style="left:505px;top:658px;width:64px;height:17px;background:#3e3e3e;"></div>
<div class="t" style="left:508px;top:660.02px;font-size:11.5px;line-height:12px;letter-spacing:0.7px;color:#d0d0d0;">0.500</div>
<div style="left:573px;top:665px;width:274px;height:2px;background:#000000;"></div>
<div style="left:573px;top:667px;width:274px;height:1px;background:#6e6e6e;"></div>
<div style="left:846px;top:663px;width:1px;height:5px;background:#6e6e6e;"></div>
<div style="left:703px;top:658px;width:11px;height:16px;background:#000000;"></div>
<div style="left:703px;top:658px;width:10px;height:15px;background:#6e6e6e;"></div>
<div style="left:704px;top:659px;width:9px;height:14px;background:#333333;"></div>
<div style="left:852px;top:658px;width:16px;height:16px;background:#000000;"></div>
<div style="left:852px;top:658px;width:15px;height:15px;background:#6e6e6e;"></div>
<div style="left:853px;top:659px;width:14px;height:14px;background:#333333;"></div>
<div class="t" style="left:856.5px;top:660.02px;font-size:11.5px;line-height:12px;letter-spacing:0px;color:#d0d0d0;">R</div>
<div style="left:392px;top:683px;width:480px;height:87px;border:1px solid #5a5a5a;border-radius:3px;"></div>
<svg style="left:396px;top:688px" width="7" height="7"><path d="M0 0 L7 0 L3.5 7 Z" fill="#c8c8c8"/></svg>
<div class="t" style="left:408.5px;top:686.02px;font-size:11.5px;line-height:12px;letter-spacing:0.7px;color:#d0d0d0;">Enhance Selection</div>
<div class="t" style="right:866.30px;top:705.52px;font-size:11.5px;line-height:12px;letter-spacing:0.7px;color:#d0d0d0;text-align:right;">Enhance Selection</div>
<div style="left:503px;top:705px;width:13px;height:13px;background:#737373;"></div>
<div style="left:503px;top:705px;width:12px;height:12px;background:#5c5c5c;"></div>
<div style="left:503px;top:705px;width:11px;height:11px;background:#000;"></div>
<div style="left:505px;top:707px;width:9px;height:9px;background:#414141;"></div>
<div style="left:852px;top:704px;width:16px;height:16px;background:#000000;"></div>
<div style="left:852px;top:704px;width:15px;height:15px;background:#6e6e6e;"></div>
<div style="left:853px;top:705px;width:14px;height:14px;background:#333333;"></div>
<div class="t" style="left:856.5px;top:706.02px;font-size:11.5px;line-height:12px;letter-spacing:0px;color:#d0d0d0;">R</div>
<div class="t" style="right:866.30px;top:728.02px;font-size:11.5px;line-height:12px;letter-spacing:0.7px;color:#d0d0d0;text-align:right;">Range Min</div>
<div style="left:503px;top:724px;width:67px;height:20px;background:#6e6e6e;"></div>
<div style="left:503px;top:724px;width:66px;height:19px;background:#000000;"></div>
<div style="left:505px;top:726px;width:64px;height:17px;background:#3e3e3e;"></div>
<div class="t" style="left:508px;top:728.02px;font-size:11.5px;line-height:12px;letter-spacing:0.7px;color:#d0d0d0;">0.200</div>
<div style="left:573px;top:733px;width:274px;height:2px;background:#000000;"></div>
<div style="left:573px;top:735px;width:274px;height:1px;background:#6e6e6e;"></div>
<div style="left:846px;top:731px;width:1px;height:5px;background:#6e6e6e;"></div>
<div style="left:626px;top:726px;width:11px;height:16px;background:#000000;"></div>
<div style="left:626px;top:726px;width:10px;height:15px;background:#6e6e6e;"></div>
<div style="left:627px;top:727px;width:9px;height:14px;background:#333333;"></div>
<div style="left:852px;top:726px;width:16px;height:16px;background:#000000;"></div>
<div style="left:852px;top:726px;width:15px;height:15px;background:#6e6e6e;"></div>
<div style="left:853px;top:727px;width:14px;height:14px;background:#333333;"></div>
<div class="t" style="left:856.5px;top:728.02px;font-size:11.5px;line-height:12px;letter-spacing:0px;color:#d0d0d0;">R</div>
<div class="t" style="right:866.30px;top:751.02px;font-size:11.5px;line-height:12px;letter-spacing:0.7px;color:#d0d0d0;text-align:right;">Range Max</div>
<div style="left:503px;top:747px;width:67px;height:20px;background:#6e6e6e;"></div>
<div style="left:503px;top:747px;width:66px;height:19px;background:#000000;"></div>
<div style="left:505px;top:749px;width:64px;height:17px;background:#3e3e3e;"></div>
<div class="t" style="left:508px;top:751.02px;font-size:11.5px;line-height:12px;letter-spacing:0.7px;color:#d0d0d0;">0.300</div>
<div style="left:573px;top:756px;width:274px;height:2px;background:#000000;"></div>
<div style="left:573px;top:758px;width:274px;height:1px;background:#6e6e6e;"></div>
<div style="left:846px;top:754px;width:1px;height:5px;background:#6e6e6e;"></div>
<div style="left:652px;top:749px;width:11px;height:16px;background:#000000;"></div>
<div style="left:652px;top:749px;width:10px;height:15px;background:#6e6e6e;"></div>
<div style="left:653px;top:750px;width:9px;height:14px;background:#333333;"></div>
<div style="left:852px;top:749px;width:16px;height:16px;background:#000000;"></div>
<div style="left:852px;top:749px;width:15px;height:15px;background:#6e6e6e;"></div>
<div style="left:853px;top:750px;width:14px;height:14px;background:#333333;"></div>
<div class="t" style="left:856.5px;top:751.02px;font-size:11.5px;line-height:12px;letter-spacing:0px;color:#d0d0d0;">R</div>
<div style="left:880px;top:50px;width:1px;height:720px;background:#6e6e6e;"></div>
<div style="left:1023px;top:50px;width:340px;height:1px;background:#6e6e6e;"></div>
<div style="left:1363px;top:50px;width:1px;height:720px;background:#000;"></div>
<div style="left:1364px;top:50px;width:3px;height:720px;background:#363636;"></div>
<svg style="left:879px;top:12px" width="8" height="7"><path d="M0 0 L8 0 L4.0 7 Z" fill="#c8c8c8"/></svg>
<div style="left:892px;top:5px;width:454px;height:20px;background:#6e6e6e;"></div>
<div style="left:892px;top:5px;width:453px;height:19px;background:#000;"></div>
<div style="left:894px;top:7px;width:451px;height:17px;background:#3f3f3f;"></div>
<div class="t" style="left:896.5px;top:10.02px;font-size:11.5px;line-height:12px;letter-spacing:0.7px;color:#d0d0d0;">Color Range to Mask</div>
<div style="left:1350px;top:7px;width:15px;height:17px;background:#000;"></div>
<div style="left:1350px;top:7px;width:14px;height:15px;background:#6e6e6e;"></div>
<div style="left:1351px;top:8px;width:13px;height:14px;background:#333333;"></div>
<div class="t" style="left:1354.5px;top:9.02px;font-size:11.5px;line-height:12px;letter-spacing:0px;color:#d0d0d0;">x</div>
<div style="left:882px;top:33px;width:139px;height:18px;border-left:1px solid #6e6e6e;border-top:1px solid #6e6e6e;border-top-left-radius:3px;"></div>
<div style="left:1022px;top:34px;width:1px;height:17px;background:#000;"></div>
<div class="t" style="left:892.5px;top:36.32px;font-size:11.5px;line-height:12px;letter-spacing:0.7px;color:#d0d0d0;">Color Range to Mask</div>
<div style="left:1023px;top:31px;width:100px;height:20px;border-left:1px solid #6e6e6e;border-top:1px solid #6e6e6e;border-top-left-radius:3px;"></div>
<div style="left:1124px;top:32px;width:1px;height:19px;background:#000;"></div>
<div class="t" style="left:1035.5px;top:36.32px;font-size:11.5px;line-height:12px;letter-spacing:0.7px;color:#d0d0d0;">Color Correct</div>
<div style="left:1125px;top:33px;width:49px;height:18px;border-left:1px solid #6e6e6e;border-top:1px solid #6e6e6e;border-top-left-radius:3px;"></div>
<div style="left:1175px;top:34px;width:1px;height:17px;background:#000;"></div>
<div class="t" style="left:1137px;top:36.32px;font-size:11.5px;line-height:12px;letter-spacing:0.7px;color:#d0d0d0;">Node</div>
<div style="left:880px;top:50px;width:143px;height:1px;background:#6e6e6e;"></div>
<div style="left:1125px;top:50px;width:238px;height:1px;background:#6e6e6e;"></div>
<div style="left:882px;top:52px;width:480px;height:198px;border:1px solid #5a5a5a;border-radius:3px;"></div>
<svg style="left:886px;top:57px" width="7" height="7"><path d="M0 0 L7 0 L3.5 7 Z" fill="#c8c8c8"/></svg>
<div class="t" style="left:898.5px;top:55.02px;font-size:11.5px;line-height:12px;letter-spacing:0.7px;color:#d0d0d0;">Grade</div>
<div class="t" style="right:376.30px;top:74.52px;font-size:11.5px;line-height:12px;letter-spacing:0.7px;color:#d0d0d0;text-align:right;">Grade Mode</div>
<div style="left:993px;top:74px;width:13px;height:13px;background:#737373;"></div>
<div style="left:993px;top:74px;width:12px;height:12px;background:#5c5c5c;"></div>
<div style="left:993px;top:74px;width:11px;height:11px;background:#000;"></div>
<div style="left:995px;top:76px;width:9px;height:9px;background:#414141;"></div>
<div style="left:1342px;top:73px;width:16px;height:16px;background:#000000;"></div>
<div style="left:1342px;top:73px;width:15px;height:15px;background:#6e6e6e;"></div>
<div style="left:1343px;top:74px;width:14px;height:14px;background:#333333;"></div>
<div class="t" style="left:1346.5px;top:75.02px;font-size:11.5px;line-height:12px;letter-spacing:0px;color:#d0d0d0;">R</div>
<div class="t" style="right:376.30px;top:96.02px;font-size:11.5px;line-height:12px;letter-spacing:0.7px;color:#d0d0d0;text-align:right;">Hue Shift</div>
<div style="left:993px;top:92px;width:67px;height:20px;background:#6e6e6e;"></div>
<div style="left:993px;top:92px;width:66px;height:19px;background:#000000;"></div>
<div style="left:995px;top:94px;width:64px;height:17px;background:#3e3e3e;"></div>
<div class="t" style="left:998px;top:96.02px;font-size:11.5px;line-height:12px;letter-spacing:0.7px;color:#d0d0d0;">0.000</div>
<div style="left:1063px;top:101px;width:274px;height:2px;background:#000000;"></div>
<div style="left:1063px;top:103px;width:274px;height:1px;background:#6e6e6e;"></div>
<div style="left:1336px;top:99px;width:1px;height:5px;background:#6e6e6e;"></div>
<div style="left:1076px;top:94px;width:11px;height:16px;background:#000000;"></div>
<div style="left:1076px;top:94px;width:10px;height:15px;background:#6e6e6e;"></div>
<div style="left:1077px;top:95px;width:9px;height:14px;background:#333333;"></div>
<div style="left:1342px;top:94px;width:16px;height:16px;background:#000000;"></div>
<div style="left:1342px;top:94px;width:15px;height:15px;background:#6e6e6e;"></div>
<div style="left:1343px;top:95px;width:14px;height:14px;background:#333333;"></div>
<div class="t" style="left:1346.5px;top:96.02px;font-size:11.5px;line-height:12px;letter-spacing:0px;color:#d0d0d0;">R</div>
<div class="t" style="right:376.30px;top:119.02px;font-size:11.5px;line-height:12px;letter-spacing:0.7px;color:#d0d0d0;text-align:right;">Saturation Scale</div>
<div style="left:993px;top:115px;width:67px;height:20px;background:#6e6e6e;"></div>
<div style="left:993px;top:115px;width:66px;height:19px;background:#000000;"></div>
<div style="left:995px;top:117px;width:64px;height:17px;background:#3e3e3e;"></div>
<div class="t" style="left:998px;top:119.02px;font-size:11.5px;line-height:12px;letter-spacing:0.7px;color:#d0d0d0;">1.000</div>
<div style="left:1063px;top:124px;width:274px;height:2px;background:#000000;"></div>
<div style="left:1063px;top:126px;width:274px;height:1px;background:#6e6e6e;"></div>
<div style="left:1336px;top:122px;width:1px;height:5px;background:#6e6e6e;"></div>
<div style="left:1089px;top:117px;width:11px;height:16px;background:#000000;"></div>
<div style="left:1089px;top:117px;width:10px;height:15px;background:#6e6e6e;"></div>
<div style="left:1090px;top:118px;width:9px;height:14px;background:#333333;"></div>
<div style="left:1342px;top:117px;width:16px;height:16px;background:#000000;"></div>
<div style="left:1342px;top:117px;width:15px;height:15px;background:#6e6e6e;"></div>
<div style="left:1343px;top:118px;width:14px;height:14px;background:#333333;"></div>
<div class="t" style="left:1346.5px;top:119.02px;font-size:11.5px;line-height:12px;letter-spacing:0px;color:#d0d0d0;">R</div>
<div class="t" style="right:376.30px;top:142.02px;font-size:11.5px;line-height:12px;letter-spacing:0.7px;color:#d0d0d0;text-align:right;">Value Scale</div>
<div style="left:993px;top:138px;width:67px;height:20px;background:#6e6e6e;"></div>
<div style="left:993px;top:138px;width:66px;height:19px;background:#000000;"></div>
<div style="left:995px;top:140px;width:64px;height:17px;background:#3e3e3e;"></div>
<div class="t" style="left:998px;top:142.02px;font-size:11.5px;line-height:12px;letter-spacing:0.7px;color:#d0d0d0;">1.000</div>
<div style="left:1063px;top:147px;width:274px;height:2px;background:#000000;"></div>
<div style="left:1063px;top:149px;width:274px;height:1px;background:#6e6e6e;"></div>
<div style="left:1336px;top:145px;width:1px;height:5px;background:#6e6e6e;"></div>
<div style="left:1089px;top:140px;width:11px;height:16px;background:#000000;"></div>
<div style="left:1089px;top:140px;width:10px;height:15px;background:#6e6e6e;"></div>
<div style="left:1090px;top:141px;width:9px;height:14px;background:#333333;"></div>
<div style="left:1342px;top:140px;width:16px;height:16px;background:#000000;"></div>
<div style="left:1342px;top:140px;width:15px;height:15px;background:#6e6e6e;"></div>
<div style="left:1343px;top:141px;width:14px;height:14px;background:#333333;"></div>
<div class="t" style="left:1346.5px;top:142.02px;font-size:11.5px;line-height:12px;letter-spacing:0px;color:#d0d0d0;">R</div>
<div class="t" style="right:376.30px;top:165.02px;font-size:11.5px;line-height:12px;letter-spacing:0.7px;color:#d0d0d0;text-align:right;">Gamma</div>
<div style="left:993px;top:161px;width:67px;height:20px;background:#6e6e6e;"></div>
<div style="left:993px;top:161px;width:66px;height:19px;background:#000000;"></div>
<div style="left:995px;top:163px;width:64px;height:17px;background:#3e3e3e;"></div>
<div class="t" style="left:998px;top:165.02px;font-size:11.5px;line-height:12px;letter-spacing:0.7px;color:#d0d0d0;">1.000</div>
<div style="left:1063px;top:170px;width:274px;height:2px;background:#000000;"></div>
<div style="left:1063px;top:172px;width:274px;height:1px;background:#6e6e6e;"></div>
<div style="left:1336px;top:168px;width:1px;height:5px;background:#6e6e6e;"></div>
<div style="left:1151px;top:163px;width:11px;height:16px;background:#000000;"></div>
<div style="left:1151px;top:163px;width:10px;height:15px;background:#6e6e6e;"></div>
<div style="left:1152px;top:164px;width:9px;height:14px;background:#333333;"></div>
<div style="left:1342px;top:163px;width:16px;height:16px;background:#000000;"></div>
<div style="left:1342px;top:163px;width:15px;height:15px;background:#6e6e6e;"></div>
<div style="left:1343px;top:164px;width:14px;height:14px;background:#333333;"></div>
<div class="t" style="left:1346.5px;top:165.02px;font-size:11.5px;line-height:12px;letter-spacing:0px;color:#d0d0d0;">R</div>
<div class="t" style="right:376.30px;top:188.02px;font-size:11.5px;line-height:12px;letter-spacing:0.7px;color:#d0d0d0;text-align:right;">Contrast</div>
<div style="left:993px;top:184px;width:67px;height:20px;background:#6e6e6e;"></div>
<div style="left:993px;top:184px;width:66px;height:19px;background:#000000;"></div>
<div style="left:995px;top:186px;width:64px;height:17px;background:#3e3e3e;"></div>
<div class="t" style="left:998px;top:188.02px;font-size:11.5px;line-height:12px;letter-spacing:0.7px;color:#d0d0d0;">1.000</div>
<div style="left:1063px;top:193px;width:274px;height:2px;background:#000000;"></div>
<div style="left:1063px;top:195px;width:274px;height:1px;background:#6e6e6e;"></div>
<div style="left:1336px;top:191px;width:1px;height:5px;background:#6e6e6e;"></div>
<div style="left:1195px;top:186px;width:11px;height:16px;background:#000000;"></div>
<div style="left:1195px;top:186px;width:10px;height:15px;background:#6e6e6e;"></div>
<div style="left:1196px;top:187px;width:9px;height:14px;background:#333333;"></div>
<div style="left:1342px;top:186px;width:16px;height:16px;background:#000000;"></div>
<div style="left:1342px;top:186px;width:15px;height:15px;background:#6e6e6e;"></div>
<div style="left:1343px;top:187px;width:14px;height:14px;background:#333333;"></div>
<div class="t" style="left:1346.5px;top:188.02px;font-size:11.5px;line-height:12px;letter-spacing:0px;color:#d0d0d0;">R</div>
<div class="t" style="right:376.30px;top:211.02px;font-size:11.5px;line-height:12px;letter-spacing:0.7px;color:#d0d0d0;text-align:right;">Contrast Pivot</div>
<div style="left:993px;top:207px;width:67px;height:20px;background:#6e6e6e;"></div>
<div style="left:993px;top:207px;width:66px;height:19px;background:#000000;"></div>
<div style="left:995px;top:209px;width:64px;height:17px;background:#3e3e3e;"></div>
<div class="t" style="left:998px;top:211.02px;font-size:11.5px;line-height:12px;letter-spacing:0.7px;color:#d0d0d0;">0.500</div>
<div style="left:1063px;top:216px;width:274px;height:2px;background:#000000;"></div>
<div style="left:1063px;top:218px;width:274px;height:1px;background:#6e6e6e;"></div>
<div style="left:1336px;top:214px;width:1px;height:5px;background:#6e6e6e;"></div>
<div style="left:1195px;top:209px;width:11px;height:16px;background:#000000;"></div>
<div style="left:1195px;top:209px;width:10px;height:15px;background:#6e6e6e;"></div>
<div style="left:1196px;top:210px;width:9px;height:14px;background:#333333;"></div>
<div style="left:1342px;top:209px;width:16px;height:16px;background:#000000;"></div>
<div style="left:1342px;top:209px;width:15px;height:15px;background:#6e6e6e;"></div>
<div style="left:1343px;top:210px;width:14px;height:14px;background:#333333;"></div>
<div class="t" style="left:1346.5px;top:211.02px;font-size:11.5px;line-height:12px;letter-spacing:0px;color:#d0d0d0;">R</div>
<div class="t" style="right:376.30px;top:231.52px;font-size:11.5px;line-height:12px;letter-spacing:0.7px;color:#d0d0d0;text-align:right;">Clamp</div>
<div style="left:993px;top:231px;width:13px;height:13px;background:#737373;"></div>
<div style="left:993px;top:231px;width:12px;height:12px;background:#5c5c5c;"></div>
<div style="left:993px;top:231px;width:11px;height:11px;background:#000;"></div>
<div style="left:995px;top:233px;width:9px;height:9px;background:#414141;"></div>
<svg style="left:993px;top:231px" width="13" height="13"><path d="M3.8 6.2 L5.5 8.8 L9.4 4.2" stroke="#d4d4d4" stroke-width="2.1" fill="none"/></svg>
<div style="left:1342px;top:230px;width:16px;height:16px;background:#000000;"></div>
<div style="left:1342px;top:230px;width:15px;height:15px;background:#6e6e6e;"></div>
<div style="left:1343px;top:231px;width:14px;height:14px;background:#333333;"></div>
<div class="t" style="left:1346.5px;top:232.02px;font-size:11.5px;line-height:12px;letter-spacing:0px;color:#d0d0d0;">R</div>
</body></html>
